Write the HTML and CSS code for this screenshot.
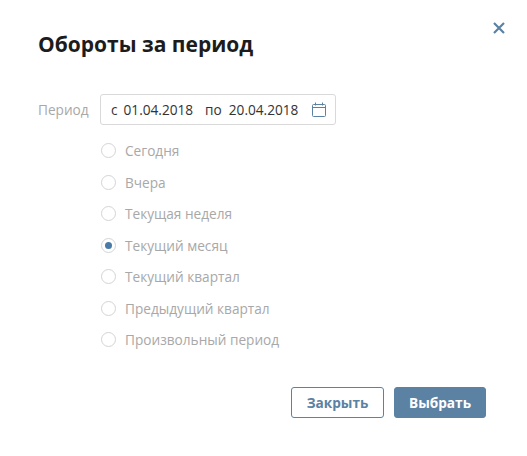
FILE: index.html
```html
<!DOCTYPE html>
<html lang="ru">
<head>
  <meta charset="UTF-8">
  <meta name="viewport" content="width=device-width, initial-scale=1.0">
  <title>Обороты за период</title>
  <link rel="stylesheet" href="styles.css">
</head>
<body>
  <div class="dialog">
    <span class="close">
      <svg width="12" height="12" viewBox="0 0 12 12"><path d="M1 1L11 11M11 1L1 11" stroke="#5b82a3" stroke-width="2.2" fill="none"/></svg>
    </span>
    <h1>Обороты за период</h1>

    <div class="period-row">
      <label class="period-label">Период</label>
      <div class="date-input">
        <span class="date-text">с</span>
        <span class="date-text date-from">01.04.2018</span>
        <span class="date-text date-to-label">по</span>
        <span class="date-text date-to">20.04.2018</span>
        <svg class="calendar" width="14" height="15" viewBox="0 0 14 15" fill="none" stroke="#5b82a3">
          <rect x="0.5" y="2.5" width="13" height="12" rx="1"/>
          <path d="M0.5 5.5H13.5M3.5 0.5V3.5M10.5 0.5V3.5"/>
        </svg>
      </div>
    </div>

    <div class="radio-list">
      <div class="radio-item"><span class="radio"></span>Сегодня</div>
      <div class="radio-item"><span class="radio"></span>Вчера</div>
      <div class="radio-item"><span class="radio"></span>Текущая неделя</div>
      <div class="radio-item"><span class="radio checked"></span>Текущий месяц</div>
      <div class="radio-item"><span class="radio"></span>Текущий квартал</div>
      <div class="radio-item"><span class="radio"></span>Предыдущий квартал</div>
      <div class="radio-item"><span class="radio"></span>Произвольный период</div>
    </div>

    <div class="buttons">
      <button class="btn btn-close">Закрыть</button>
      <button class="btn btn-select">Выбрать</button>
    </div>
  </div>
</body>
</html>
```

FILE: styles.css
```css
body {
  margin: 0;
  background-color: #fff;
  font-family: "Open Sans", "Noto Sans", sans-serif;
}
.dialog {
  position: relative;
  width: 527px;
  height: 456px;
  padding: 30px 41px 0 38px;
  box-sizing: border-box;
}
.close {
  position: absolute;
  left: 493px;
  top: 22px;
  width: 12px;
  height: 12px;
  display: flex;
}
h1 {
  margin: 0;
  font-size: 21px;
  line-height: 28px;
  font-weight: 700;
  color: #1c1c1c;
}
.period-row {
  display: flex;
  align-items: center;
  margin-top: 36px;
}
.period-label {
  width: 62px;
  font-size: 13.65px;
  color: #a8a8a8;
}
.date-input {
  display: flex;
  align-items: center;
  box-sizing: border-box;
  width: 236px;
  height: 31px;
  padding: 0 9px 0 10px;
  border: 1px solid #d9d9d9;
  border-radius: 3px;
  font-size: 13.65px;
  color: #333;
}
.date-text {
  white-space: nowrap;
}
.date-from {
  margin-left: 6px;
}
.date-to-label {
  margin-left: 12px;
}
.date-to {
  margin-left: 7px;
}
.calendar {
  margin-left: auto;
}
.radio-list {
  margin-top: 10px;
  margin-left: 63px;
}
.radio-item {
  display: flex;
  align-items: center;
  height: 31.5px;
  font-size: 13.65px;
  color: #a8a8a8;
}
.radio {
  box-sizing: border-box;
  width: 15px;
  height: 15px;
  margin-right: 9px;
  border: 1px solid #d4d4d4;
  border-radius: 50%;
  display: flex;
  align-items: center;
  justify-content: center;
}
.radio.checked::after {
  content: "";
  width: 7px;
  height: 7px;
  border-radius: 50%;
  background-color: #4a7ba6;
}
.buttons {
  display: flex;
  justify-content: flex-end;
  gap: 10px;
  margin-top: 31.5px;
}
.btn {
  box-sizing: border-box;
  width: 92px;
  height: 31px;
  border-radius: 3px;
  border: 1px solid #5b82a3;
  font-family: inherit;
  font-size: 13.65px;
  font-weight: 700;
  cursor: pointer;
}
.btn-close {
  width: 93px;
  background-color: #fff;
  color: #5b82a3;
}
.btn-select {
  background-color: #5b82a3;
  color: #fff;
}
```
